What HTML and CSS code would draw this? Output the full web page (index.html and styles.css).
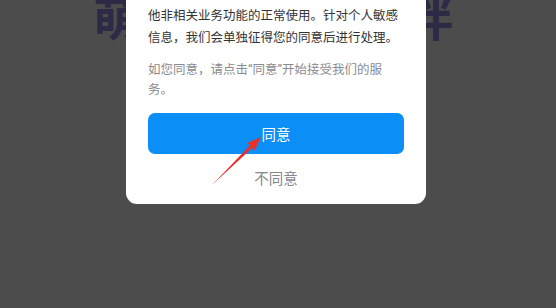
FILE: index.html
```html
<!DOCTYPE html>
<html lang="zh-CN">
<head>
    <meta charset="UTF-8">
    <meta name="viewport" content="width=device-width, initial-scale=1.0">
    <title>用户协议与隐私政策</title>
    <link rel="stylesheet" href="styles.css">
</head>
<body>
    <h1 class="page-title">萌宠一生好伙伴</h1>

    <div class="mask">
        <div class="dialog">
            <div class="dialog-title">温馨提示</div>
            <p class="dialog-text">我们会严格按照法律法规保护您的个人信息，拒绝提供非必要信息不会影响您使用本应用其他非相关业务功能的正常使用。针对个人敏感信息，我们会单独征得您的同意后进行处理。</p>
            <p class="dialog-tip">如您同意，请点击“同意”开始接受我们的服务。</p>
            <button class="btn-agree">同意</button>
            <button class="btn-refuse">不同意</button>
        </div>
    </div>

    <svg class="arrow" viewBox="0 0 556 308" width="556" height="308">
        <polygon points="212,185 252.2,147.9 254.6,150.5 261,137 247.2,143 249.8,145.4" fill="#e8312b"/>
    </svg>
</body>
</html>
```

FILE: styles.css
```css
* {
    margin: 0;
    padding: 0;
    box-sizing: border-box;
}

body {
    background-color: #4c4c4c;
    font-family: Roboto, "Noto Sans CJK SC", sans-serif;
    height: 100vh;
    overflow: hidden;
}

.page-title {
    margin-top: -4px;
    padding-left: 93px;
    font-size: 48px;
    line-height: 48px;
    letter-spacing: 4px;
    font-weight: 700;
    color: #2d2a46;
    white-space: nowrap;
}

.mask {
    position: fixed;
    inset: 0;
    display: flex;
    justify-content: center;
    align-items: flex-end;
    padding-right: 4px;
    padding-bottom: 104px;
}

.dialog {
    width: 300px;
    background-color: #fff;
    border-radius: 11px;
    padding: 20px 22px 12px;
    display: flex;
    flex-direction: column;
}

.dialog-title {
    font-size: 16px;
    font-weight: 700;
    color: #222;
    text-align: center;
    margin-bottom: 12px;
}

.dialog-text {
    font-size: 12.5px;
    line-height: 22px;
    color: #333;
}

.dialog-tip {
    margin-top: 11px;
    font-size: 12.5px;
    line-height: 20px;
    color: #8a8a90;
}

.btn-agree {
    margin-top: 13px;
    height: 41px;
    border: none;
    border-radius: 7px;
    background-color: #0b8ef6;
    color: #fff;
    font-family: inherit;
    font-size: 14.5px;
}

.btn-refuse {
    margin-top: 14px;
    border: none;
    background: none;
    color: #86868c;
    font-family: inherit;
    font-size: 14.5px;
    line-height: 24px;
}

.arrow {
    position: fixed;
    left: 0;
    top: 0;
    pointer-events: none;
}
```
